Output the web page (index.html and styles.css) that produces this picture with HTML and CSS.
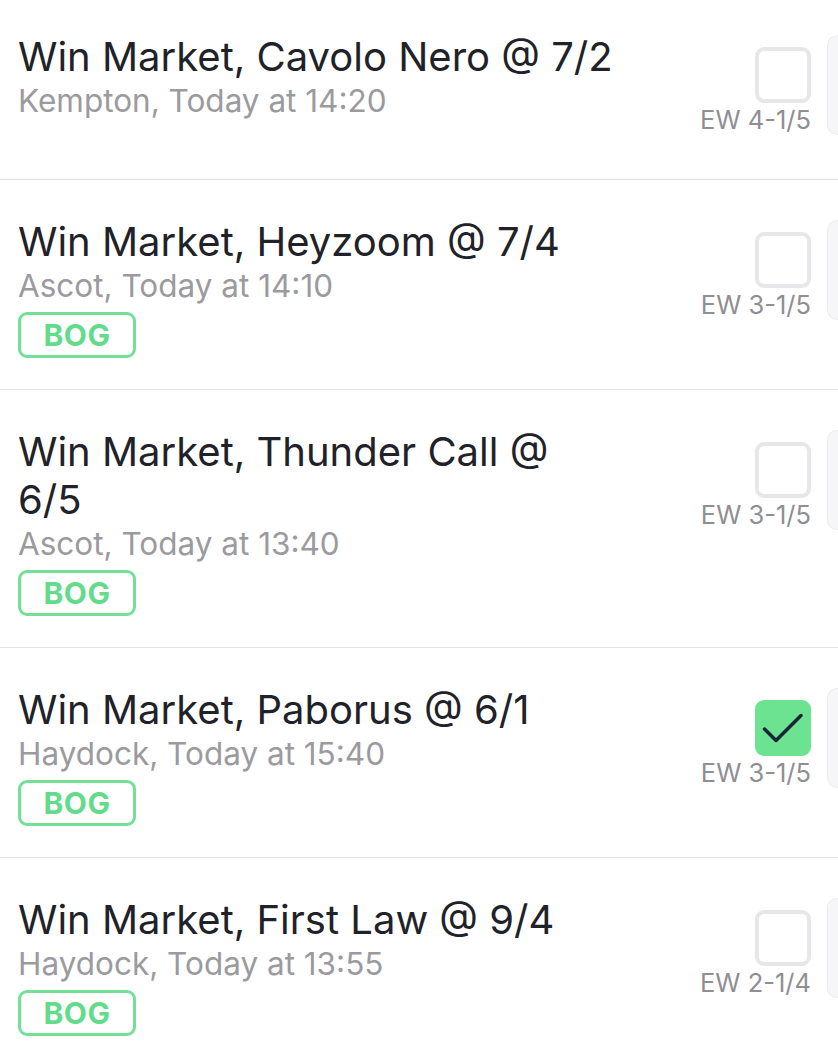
FILE: index.html
```html
<!DOCTYPE html>
<html lang="en">
<head>
    <meta charset="UTF-8">
    <meta name="viewport" content="width=device-width, initial-scale=1.0">
    <title>Bets</title>
    <link rel="stylesheet" href="styles.css">
</head>
<body>

<div class="bet-list">
    <div class="bet-row">
        <div class="bet-info">
            <div class="bet-title">Win Market, Cavolo Nero @ 7/2</div>
            <div class="bet-meta">Kempton, Today at 14:20</div>
        </div>
        <div class="bet-side">
            <span class="check"></span>
            <span class="ew">EW 4-1/5</span>
        </div>
        <div class="bet-peek"></div>
    </div>

    <div class="bet-row">
        <div class="bet-info">
            <div class="bet-title">Win Market, Heyzoom @ 7/4</div>
            <div class="bet-meta">Ascot, Today at 14:10</div>
            <span class="badge">BOG</span>
        </div>
        <div class="bet-side">
            <span class="check"></span>
            <span class="ew">EW 3-1/5</span>
        </div>
        <div class="bet-peek"></div>
    </div>

    <div class="bet-row">
        <div class="bet-info">
            <div class="bet-title">Win Market, Thunder Call @ 6/5</div>
            <div class="bet-meta">Ascot, Today at 13:40</div>
            <span class="badge">BOG</span>
        </div>
        <div class="bet-side">
            <span class="check"></span>
            <span class="ew">EW 3-1/5</span>
        </div>
        <div class="bet-peek"></div>
    </div>

    <div class="bet-row">
        <div class="bet-info">
            <div class="bet-title">Win Market, Paborus @ 6/1</div>
            <div class="bet-meta">Haydock, Today at 15:40</div>
            <span class="badge">BOG</span>
        </div>
        <div class="bet-side">
            <span class="check checked">
                <svg viewBox="0 0 56 56" width="56" height="56"><path d="M9.5 29 L21 40.5 L46 15.5" fill="none" stroke="#172536" stroke-width="3.5" stroke-linecap="round" stroke-linejoin="round"/></svg>
            </span>
            <span class="ew">EW 3-1/5</span>
        </div>
        <div class="bet-peek"></div>
    </div>

    <div class="bet-row">
        <div class="bet-info">
            <div class="bet-title">Win Market, First Law @ 9/4</div>
            <div class="bet-meta">Haydock, Today at 13:55</div>
            <span class="badge">BOG</span>
        </div>
        <div class="bet-side">
            <span class="check"></span>
            <span class="ew">EW 2-1/4</span>
        </div>
        <div class="bet-peek"></div>
    </div>
</div>

</body>
</html>
```

FILE: styles.css
```css
body {
    font-family: Inter, "Noto Sans", sans-serif;
    background-color: #ffffff;
    margin: 0;
    padding: 0;
    overflow: hidden;
}

.bet-list {
    margin-top: -5px;
}

.bet-row {
    display: flex;
    align-items: flex-start;
    box-sizing: border-box;
    min-height: 185px;
    padding: 38px 0 31px 18px;
    border-bottom: 1px solid #e2e2e4;
}

.bet-info {
    flex: 1;
    min-width: 0;
    padding-right: 80px;
}

.bet-title {
    font-size: 40px;
    line-height: 48px;
    color: #1f2229;
}

.bet-meta {
    font-size: 31.5px;
    line-height: 40px;
    color: #9a9a9f;
}

.badge {
    display: inline-flex;
    align-items: center;
    justify-content: center;
    box-sizing: border-box;
    width: 118px;
    height: 46px;
    margin-top: 6px;
    border: 3px solid #74e097;
    border-radius: 9px;
    color: #62dc8b;
    font-size: 30px;
    font-weight: 700;
    letter-spacing: 0.5px;
}

.bet-side {
    flex-shrink: 0;
    width: 110px;
    padding-top: 14px;
    display: flex;
    flex-direction: column;
    align-items: flex-end;
}

.check {
    display: block;
    box-sizing: border-box;
    width: 56px;
    height: 56px;
    border: 4px solid #e7e7e9;
    border-radius: 9px;
}

.check.checked {
    border: none;
    background-color: #6be390;
}

.check svg {
    display: block;
}

.ew {
    margin-top: 3px;
    font-size: 25.5px;
    line-height: 28px;
    color: #8e8e93;
    white-space: nowrap;
}

.bet-peek {
    flex-shrink: 0;
    width: 11px;
    height: 100px;
    margin: 2px 0 0 16px;
    box-sizing: border-box;
    background-color: #f6f6f8;
    border: 1px solid #ececef;
    border-right: none;
    border-radius: 10px 0 0 10px;
}
```
